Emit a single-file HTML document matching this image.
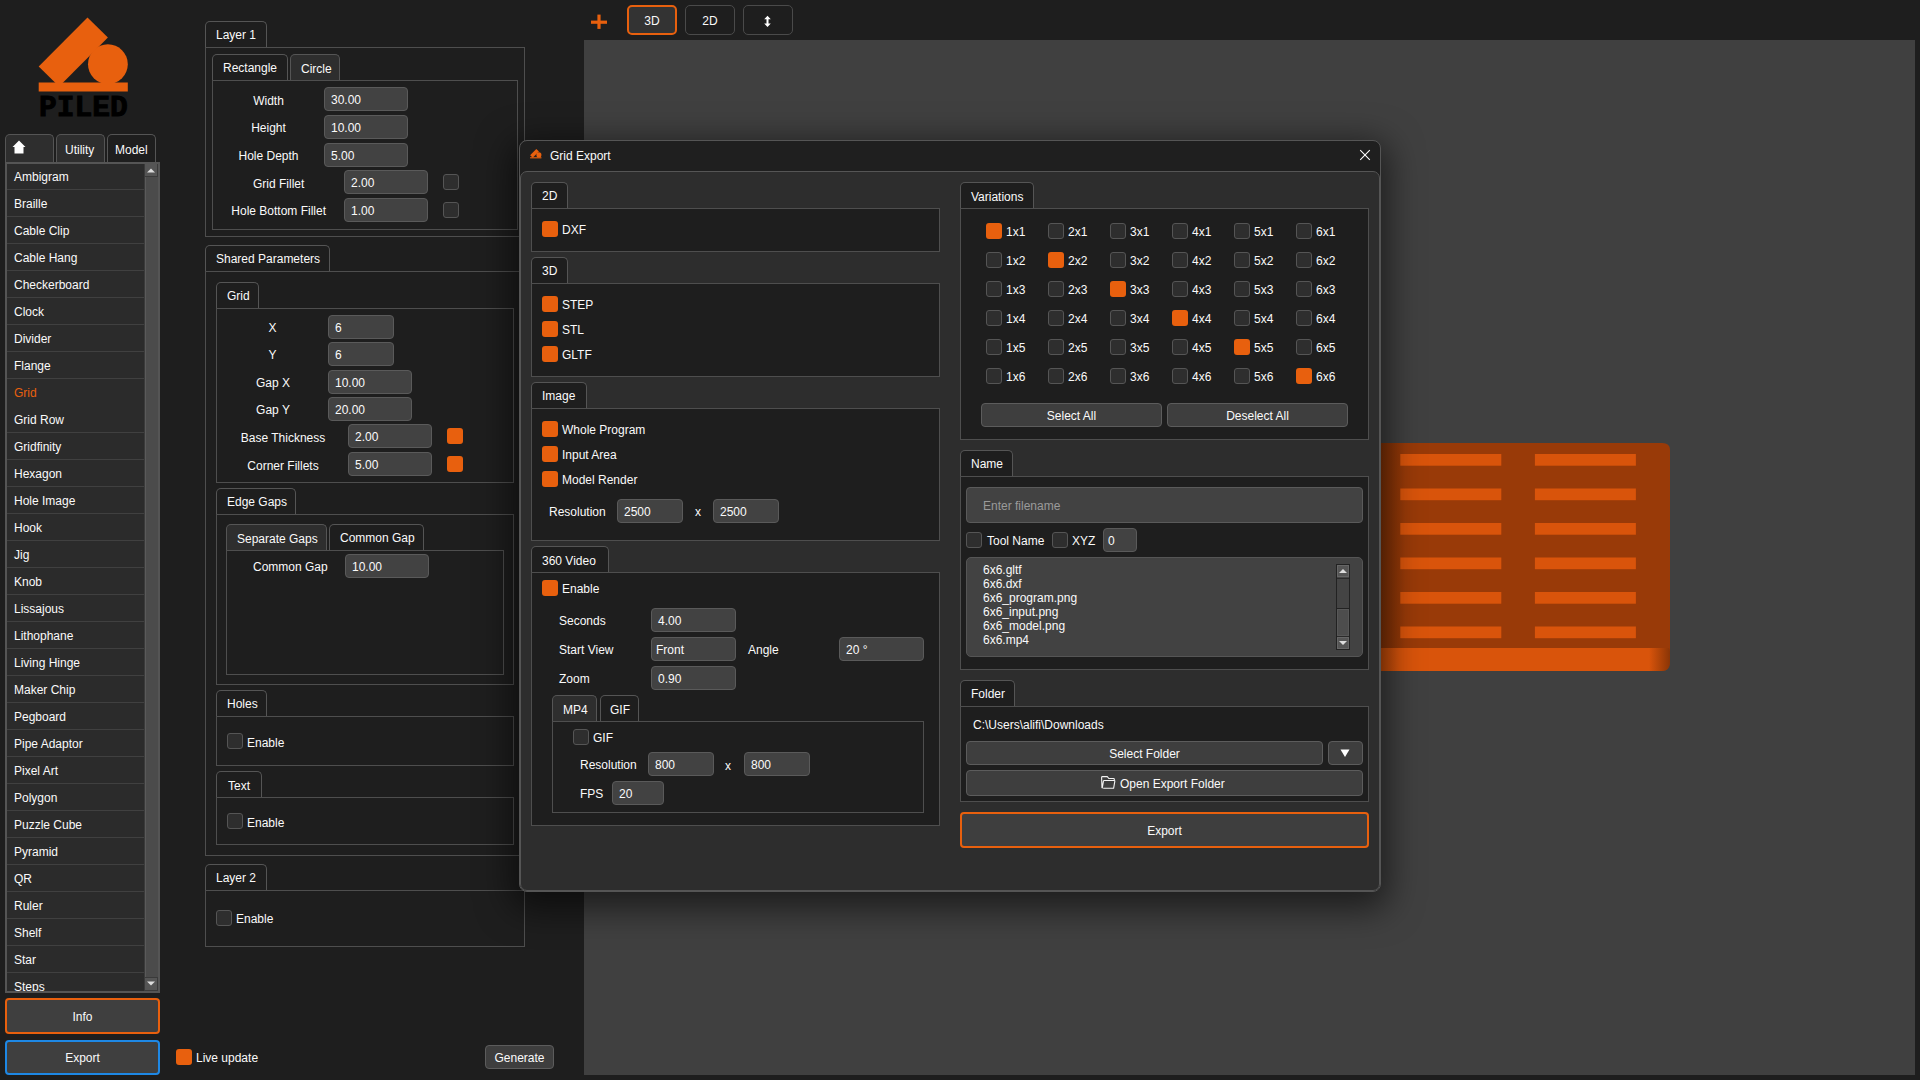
<!DOCTYPE html>
<html><head><meta charset="utf-8"><style>
html,body{margin:0;padding:0;}
body{width:1920px;height:1080px;overflow:hidden;position:relative;background:#1e1e1e;font-family:"Liberation Sans",sans-serif;font-size:12px;color:#fafafa;}
.t{position:absolute;line-height:20px;white-space:nowrap;font-size:12px;color:#fafafa;}
.tab{position:absolute;border:1px solid #555;border-bottom:none;border-radius:5px 5px 0 0;}
.pane{position:absolute;border:1px solid #4e4e4e;}
.inp{position:absolute;border:1px solid #5a5a5a;border-radius:4px;background:#424242;}
.cb{position:absolute;border:1px solid #555;border-radius:3px;background:#2e2e2e;}
.cb.on{border:none;background:#e8600e;}
</style></head><body>
<svg style="position:absolute;left:0;top:0" width="160" height="125" viewBox="0 0 160 125">
<g fill="#e8600e">
<polygon points="87.5,17.6 107.9,37.5 59.1,86.4 38.7,66.5"/>
<circle cx="107.9" cy="64.2" r="19.9"/>
<rect x="38.7" y="82.5" width="89.1" height="9"/>
</g>
<text x="38.9" y="116.3" font-family="Liberation Mono" font-weight="bold" font-size="30" fill="#000" stroke="#000" stroke-width="0.9" textLength="89" lengthAdjust="spacingAndGlyphs">PILED</text>
</svg><div class="tab" style="left:5px;top:134px;width:47px;height:27px;background:#2e2e2e"></div><div class="t" style="left:16px;top:141px;"></div><svg style="position:absolute;left:12px;top:140px" width="15" height="15" viewBox="0 0 15 15"><path d="M7 0.5 L13.5 7 L11.5 7 L11.5 13.5 L2.5 13.5 L2.5 7 L0.5 7 Z" fill="#fff"/></svg><div class="tab" style="left:56px;top:134px;width:47px;height:27px;background:#2e2e2e"></div><div class="t" style="left:65px;top:140px;">Utility</div><div class="tab" style="left:107px;top:134px;width:47px;height:27px;background:#1e1e1e"></div><div class="t" style="left:115px;top:140px;">Model</div><div style="position:absolute;left:5px;top:162px;width:155px;height:831px;box-sizing:border-box;border:2px solid #555;background:#2b2b2b"></div><div style="position:absolute;left:7px;top:164px;width:137px;height:827px;overflow:hidden"><div style="position:absolute;left:0;top:25px;width:137px;height:1px;background:#404040"></div><div class="t" style="left:7px;top:3px;color:#fafafa">Ambigram</div><div style="position:absolute;left:0;top:52px;width:137px;height:1px;background:#404040"></div><div class="t" style="left:7px;top:30px;color:#fafafa">Braille</div><div style="position:absolute;left:0;top:79px;width:137px;height:1px;background:#404040"></div><div class="t" style="left:7px;top:57px;color:#fafafa">Cable Clip</div><div style="position:absolute;left:0;top:106px;width:137px;height:1px;background:#404040"></div><div class="t" style="left:7px;top:84px;color:#fafafa">Cable Hang</div><div style="position:absolute;left:0;top:133px;width:137px;height:1px;background:#404040"></div><div class="t" style="left:7px;top:111px;color:#fafafa">Checkerboard</div><div style="position:absolute;left:0;top:160px;width:137px;height:1px;background:#404040"></div><div class="t" style="left:7px;top:138px;color:#fafafa">Clock</div><div style="position:absolute;left:0;top:187px;width:137px;height:1px;background:#404040"></div><div class="t" style="left:7px;top:165px;color:#fafafa">Divider</div><div style="position:absolute;left:0;top:214px;width:137px;height:1px;background:#404040"></div><div class="t" style="left:7px;top:192px;color:#fafafa">Flange</div><div class="t" style="left:7px;top:219px;color:#e8600e">Grid</div><div style="position:absolute;left:0;top:268px;width:137px;height:1px;background:#404040"></div><div class="t" style="left:7px;top:246px;color:#fafafa">Grid Row</div><div style="position:absolute;left:0;top:295px;width:137px;height:1px;background:#404040"></div><div class="t" style="left:7px;top:273px;color:#fafafa">Gridfinity</div><div style="position:absolute;left:0;top:322px;width:137px;height:1px;background:#404040"></div><div class="t" style="left:7px;top:300px;color:#fafafa">Hexagon</div><div style="position:absolute;left:0;top:349px;width:137px;height:1px;background:#404040"></div><div class="t" style="left:7px;top:327px;color:#fafafa">Hole Image</div><div style="position:absolute;left:0;top:376px;width:137px;height:1px;background:#404040"></div><div class="t" style="left:7px;top:354px;color:#fafafa">Hook</div><div style="position:absolute;left:0;top:403px;width:137px;height:1px;background:#404040"></div><div class="t" style="left:7px;top:381px;color:#fafafa">Jig</div><div style="position:absolute;left:0;top:430px;width:137px;height:1px;background:#404040"></div><div class="t" style="left:7px;top:408px;color:#fafafa">Knob</div><div style="position:absolute;left:0;top:457px;width:137px;height:1px;background:#404040"></div><div class="t" style="left:7px;top:435px;color:#fafafa">Lissajous</div><div style="position:absolute;left:0;top:484px;width:137px;height:1px;background:#404040"></div><div class="t" style="left:7px;top:462px;color:#fafafa">Lithophane</div><div style="position:absolute;left:0;top:511px;width:137px;height:1px;background:#404040"></div><div class="t" style="left:7px;top:489px;color:#fafafa">Living Hinge</div><div style="position:absolute;left:0;top:538px;width:137px;height:1px;background:#404040"></div><div class="t" style="left:7px;top:516px;color:#fafafa">Maker Chip</div><div style="position:absolute;left:0;top:565px;width:137px;height:1px;background:#404040"></div><div class="t" style="left:7px;top:543px;color:#fafafa">Pegboard</div><div style="position:absolute;left:0;top:592px;width:137px;height:1px;background:#404040"></div><div class="t" style="left:7px;top:570px;color:#fafafa">Pipe Adaptor</div><div style="position:absolute;left:0;top:619px;width:137px;height:1px;background:#404040"></div><div class="t" style="left:7px;top:597px;color:#fafafa">Pixel Art</div><div style="position:absolute;left:0;top:646px;width:137px;height:1px;background:#404040"></div><div class="t" style="left:7px;top:624px;color:#fafafa">Polygon</div><div style="position:absolute;left:0;top:673px;width:137px;height:1px;background:#404040"></div><div class="t" style="left:7px;top:651px;color:#fafafa">Puzzle Cube</div><div style="position:absolute;left:0;top:700px;width:137px;height:1px;background:#404040"></div><div class="t" style="left:7px;top:678px;color:#fafafa">Pyramid</div><div style="position:absolute;left:0;top:727px;width:137px;height:1px;background:#404040"></div><div class="t" style="left:7px;top:705px;color:#fafafa">QR</div><div style="position:absolute;left:0;top:754px;width:137px;height:1px;background:#404040"></div><div class="t" style="left:7px;top:732px;color:#fafafa">Ruler</div><div style="position:absolute;left:0;top:781px;width:137px;height:1px;background:#404040"></div><div class="t" style="left:7px;top:759px;color:#fafafa">Shelf</div><div style="position:absolute;left:0;top:808px;width:137px;height:1px;background:#404040"></div><div class="t" style="left:7px;top:786px;color:#fafafa">Star</div><div style="position:absolute;left:0;top:835px;width:137px;height:1px;background:#404040"></div><div class="t" style="left:7px;top:813px;color:#fafafa">Steps</div></div><div style="position:absolute;left:144px;top:164px;width:14px;height:827px;background:#3a3a3a"></div><div style="position:absolute;left:145px;top:177px;width:12px;height:800px;background:#4b4b4b;border-left:1px solid #5a5a5a"></div><div style="position:absolute;left:145px;top:164px;width:12px;height:12px;background:#555"></div><div style="position:absolute;left:145px;top:978px;width:12px;height:12px;background:#555"></div><svg style="position:absolute;left:145px;top:164px" width="12" height="12"><path d="M2 8.5 L6 4.5 L10 8.5 Z" fill="#ddd"/></svg><svg style="position:absolute;left:145px;top:978px" width="12" height="12"><path d="M2 3.5 L6 7.5 L10 3.5 Z" fill="#ddd"/></svg><div style="position:absolute;box-sizing:border-box;left:5px;top:998px;width:155px;height:36px;border:2px solid #e8600e;border-radius:4px;background:#3f3f3f"></div><div class="t" style="left:5px;width:155px;text-align:center;top:1007px;">Info</div><div style="position:absolute;box-sizing:border-box;left:5px;top:1040px;width:155px;height:35px;border:2px solid #1e88e5;border-radius:4px;background:#3f3f3f"></div><div class="t" style="left:5px;width:155px;text-align:center;top:1048px;">Export</div><div class="pane" style="left:205px;top:47px;width:318px;height:188px;background:#1e1e1e"></div><div class="tab" style="left:205px;top:21px;width:60px;height:25px;background:#1e1e1e"></div><div class="t" style="left:216px;top:25px;">Layer 1</div><div class="pane" style="left:212px;top:80px;width:304px;height:148px;background:#1e1e1e"></div><div class="tab" style="left:212px;top:54px;width:74px;height:25px;background:#1e1e1e"></div><div class="t" style="left:223px;top:58px;">Rectangle</div><div class="tab" style="left:290px;top:54px;width:48px;height:25px;background:#2e2e2e"></div><div class="t" style="left:301px;top:59px;">Circle</div><div class="t" style="left:208.5px;width:120.0px;text-align:center;top:91px;">Width</div><div class="inp" style="left:324px;top:87px;width:82px;height:22px"></div><div class="t" style="left:331px;top:90px;color:#fafafa">30.00</div><div class="t" style="left:208.5px;width:120.0px;text-align:center;top:118px;">Height</div><div class="inp" style="left:324px;top:115px;width:82px;height:22px"></div><div class="t" style="left:331px;top:118px;color:#fafafa">10.00</div><div class="t" style="left:208.5px;width:120.0px;text-align:center;top:146px;">Hole Depth</div><div class="inp" style="left:324px;top:143px;width:82px;height:22px"></div><div class="t" style="left:331px;top:146px;color:#fafafa">5.00</div><div class="t" style="left:218.7px;width:120.0px;text-align:center;top:174px;">Grid Fillet</div><div class="inp" style="left:344px;top:170px;width:82px;height:22px"></div><div class="t" style="left:351px;top:173px;color:#fafafa">2.00</div><div class="cb" style="left:443px;top:174px;width:14px;height:14px"></div><div class="t" style="left:218.7px;width:120.0px;text-align:center;top:201px;">Hole Bottom Fillet</div><div class="inp" style="left:344px;top:198px;width:82px;height:22px"></div><div class="t" style="left:351px;top:201px;color:#fafafa">1.00</div><div class="cb" style="left:443px;top:202px;width:14px;height:14px"></div><div class="pane" style="left:205px;top:271px;width:314px;height:583px;background:#1e1e1e"></div><div class="tab" style="left:205px;top:245px;width:123px;height:25px;background:#1e1e1e"></div><div class="t" style="left:216px;top:249px;">Shared Parameters</div><div class="pane" style="left:216px;top:308px;width:296px;height:173px;background:#1e1e1e"></div><div class="tab" style="left:216px;top:282px;width:41px;height:25px;background:#1e1e1e"></div><div class="t" style="left:227px;top:286px;">Grid</div><div class="t" style="left:212.5px;width:120.0px;text-align:center;top:318px;">X</div><div class="inp" style="left:328px;top:315px;width:64px;height:22px"></div><div class="t" style="left:335px;top:318px;color:#fafafa">6</div><div class="t" style="left:212.5px;width:120.0px;text-align:center;top:345px;">Y</div><div class="inp" style="left:328px;top:342px;width:64px;height:22px"></div><div class="t" style="left:335px;top:345px;color:#fafafa">6</div><div class="t" style="left:213px;width:120px;text-align:center;top:373px;">Gap X</div><div class="inp" style="left:328px;top:370px;width:82px;height:22px"></div><div class="t" style="left:335px;top:373px;color:#fafafa">10.00</div><div class="t" style="left:213px;width:120px;text-align:center;top:400px;">Gap Y</div><div class="inp" style="left:328px;top:397px;width:82px;height:22px"></div><div class="t" style="left:335px;top:400px;color:#fafafa">20.00</div><div class="t" style="left:223px;width:120px;text-align:center;top:428px;">Base Thickness</div><div class="inp" style="left:348px;top:424px;width:82px;height:22px"></div><div class="t" style="left:355px;top:427px;color:#fafafa">2.00</div><div class="cb on" style="left:447px;top:428px;width:16px;height:16px"></div><div class="t" style="left:223px;width:120px;text-align:center;top:456px;">Corner Fillets</div><div class="inp" style="left:348px;top:452px;width:82px;height:22px"></div><div class="t" style="left:355px;top:455px;color:#fafafa">5.00</div><div class="cb on" style="left:447px;top:456px;width:16px;height:16px"></div><div class="pane" style="left:216px;top:514px;width:296px;height:169px;background:#1e1e1e"></div><div class="tab" style="left:216px;top:488px;width:78px;height:25px;background:#1e1e1e"></div><div class="t" style="left:227px;top:492px;">Edge Gaps</div><div class="pane" style="left:226px;top:550px;width:276px;height:123px;background:#1e1e1e"></div><div class="tab" style="left:226px;top:524px;width:99px;height:25px;background:#2e2e2e"></div><div class="t" style="left:237px;top:529px;">Separate Gaps</div><div class="tab" style="left:329px;top:524px;width:93px;height:25px;background:#1e1e1e"></div><div class="t" style="left:340px;top:528px;">Common Gap</div><div class="t" style="left:253px;top:557px;">Common Gap</div><div class="inp" style="left:345px;top:554px;width:82px;height:22px"></div><div class="t" style="left:352px;top:557px;color:#fafafa">10.00</div><div class="pane" style="left:216px;top:716px;width:296px;height:48px;background:#1e1e1e"></div><div class="tab" style="left:216px;top:690px;width:49px;height:25px;background:#1e1e1e"></div><div class="t" style="left:227px;top:694px;">Holes</div><div class="cb" style="left:227px;top:733px;width:14px;height:14px"></div><div class="t" style="left:247px;top:733px;">Enable</div><div class="pane" style="left:216px;top:797px;width:296px;height:46px;background:#1e1e1e"></div><div class="tab" style="left:216px;top:771px;width:44px;height:25px;background:#1e1e1e"></div><div class="t" style="left:228px;top:776px;">Text</div><div class="cb" style="left:227px;top:813px;width:14px;height:14px"></div><div class="t" style="left:247px;top:813px;">Enable</div><div class="pane" style="left:205px;top:890px;width:318px;height:55px;background:#1e1e1e"></div><div class="tab" style="left:205px;top:864px;width:60px;height:25px;background:#1e1e1e"></div><div class="t" style="left:216px;top:868px;">Layer 2</div><div class="cb" style="left:216px;top:910px;width:14px;height:14px"></div><div class="t" style="left:236px;top:909px;">Enable</div><div class="cb on" style="left:176px;top:1049px;width:16px;height:16px"></div><div class="t" style="left:196px;top:1048px;">Live update</div><div style="position:absolute;box-sizing:border-box;left:485px;top:1045px;width:69px;height:24px;border:1px solid #5c5c5c;border-radius:4px;background:#3e3e3e"></div><div class="t" style="left:485px;width:69px;text-align:center;top:1048px;">Generate</div><svg style="position:absolute;left:590px;top:13px" width="18" height="18"><rect x="7.4" y="1.6" width="3.2" height="14.3" fill="#e8600e"/><rect x="1" y="7.6" width="16" height="3.2" fill="#e8600e"/></svg><div style="position:absolute;box-sizing:border-box;left:627px;top:5px;width:50px;height:30px;border:2px solid #e8600e;border-radius:5px;background:#333"></div><div class="t" style="left:627px;width:50px;text-align:center;top:11px;">3D</div><div style="position:absolute;box-sizing:border-box;left:685px;top:5px;width:50px;height:30px;border:1px solid #4a4a4a;border-radius:5px;background:#1e1e1e"></div><div class="t" style="left:685px;width:50px;text-align:center;top:11px;">2D</div><div style="position:absolute;box-sizing:border-box;left:743px;top:5px;width:50px;height:30px;border:1px solid #4a4a4a;border-radius:5px;background:#1e1e1e"></div><svg style="position:absolute;left:762px;top:15px" width="11" height="13"><path d="M5.5 0.7 L8.8 4.3 L6.5 4.3 L6.5 8.4 L8.8 8.4 L5.5 12 L2.2 8.4 L4.5 8.4 L4.5 4.3 L2.2 4.3 Z" fill="#fff"/></svg><div style="position:absolute;left:584px;top:40px;width:1331px;height:1035px;background:#404040"></div><svg style="position:absolute;left:1370px;top:440px" width="310" height="240" viewBox="0 0 310 240">
<defs>
<linearGradient id="lg" x1="0" x2="1" y1="0" y2="0"><stop offset="0" stop-color="#7a2f06"/><stop offset="0.12" stop-color="#993a08"/><stop offset="1" stop-color="#993a08"/></linearGradient>
<linearGradient id="lg2" x1="0" x2="1"><stop offset="0" stop-color="#b54709"/><stop offset="0.1" stop-color="#d9540b"/><stop offset="0.93" stop-color="#d9540b"/><stop offset="1" stop-color="#8a3506"/></linearGradient>
</defs>
<path d="M0 3 L292 3 Q300 3 300 10 L300 220 Q300 231 292 231 L0 231 Z" fill="url(#lg)"/>
<path d="M0 208 L298 208 Q300 208 300 212 L300 222 Q300 231 292 231 L0 231 Z" fill="url(#lg2)"/>
<rect x="30.3" y="14.0" width="101" height="11.7" fill="#d9540b"/><rect x="164.9" y="14.0" width="101" height="11.7" fill="#d9540b"/><rect x="30.3" y="48.5" width="101" height="11.7" fill="#d9540b"/><rect x="164.9" y="48.5" width="101" height="11.7" fill="#d9540b"/><rect x="30.3" y="83.0" width="101" height="11.7" fill="#d9540b"/><rect x="164.9" y="83.0" width="101" height="11.7" fill="#d9540b"/><rect x="30.3" y="117.5" width="101" height="11.7" fill="#d9540b"/><rect x="164.9" y="117.5" width="101" height="11.7" fill="#d9540b"/><rect x="30.3" y="152.0" width="101" height="11.7" fill="#d9540b"/><rect x="164.9" y="152.0" width="101" height="11.7" fill="#d9540b"/><rect x="30.3" y="186.5" width="101" height="11.7" fill="#d9540b"/><rect x="164.9" y="186.5" width="101" height="11.7" fill="#d9540b"/>
</svg><div style="position:absolute;left:519px;top:140px;width:861px;height:751px;border-radius:8px;box-shadow:0 10px 34px 8px rgba(0,0,0,0.55)"></div><div style="position:absolute;left:519px;top:140px;width:862px;height:752px;box-sizing:border-box;border:1px solid #555;border-radius:8px;background:#1f1f1f"></div><div style="position:absolute;left:520px;top:171px;width:860px;height:720px;box-sizing:border-box;border:1px solid #555;border-radius:7px;background:#2d2d2d"></div><svg style="position:absolute;left:529px;top:148px" width="14" height="14" viewBox="30 10 110 110">
<g fill="#e8600e"><polygon points="87.5,17.6 107.9,37.5 59.1,86.4 38.7,66.5"/><circle cx="107.9" cy="64.2" r="19.9"/><rect x="38.7" y="82.5" width="89.1" height="9"/></g></svg><div class="t" style="left:550px;top:146px;">Grid Export</div><svg style="position:absolute;left:1359px;top:149px" width="12" height="12"><path d="M1.2 1.2 L10.8 10.8 M10.8 1.2 L1.2 10.8" stroke="#fff" stroke-width="1.05"/></svg><div class="pane" style="left:531px;top:208px;width:407px;height:42px;background:#1e1e1e"></div><div class="tab" style="left:531px;top:182px;width:35px;height:25px;background:#1e1e1e"></div><div class="t" style="left:542px;top:186px;">2D</div><div class="cb on" style="left:542px;top:221px;width:16px;height:16px"></div><div class="t" style="left:562px;top:220px;">DXF</div><div class="pane" style="left:531px;top:283px;width:407px;height:92px;background:#1e1e1e"></div><div class="tab" style="left:531px;top:257px;width:35px;height:25px;background:#1e1e1e"></div><div class="t" style="left:542px;top:261px;">3D</div><div class="cb on" style="left:542px;top:296px;width:16px;height:16px"></div><div class="t" style="left:562px;top:295px;">STEP</div><div class="cb on" style="left:542px;top:321px;width:16px;height:16px"></div><div class="t" style="left:562px;top:320px;">STL</div><div class="cb on" style="left:542px;top:346px;width:16px;height:16px"></div><div class="t" style="left:562px;top:345px;">GLTF</div><div class="pane" style="left:531px;top:408px;width:407px;height:131px;background:#1e1e1e"></div><div class="tab" style="left:531px;top:382px;width:54px;height:25px;background:#1e1e1e"></div><div class="t" style="left:542px;top:386px;">Image</div><div class="cb on" style="left:542px;top:421px;width:16px;height:16px"></div><div class="t" style="left:562px;top:420px;">Whole Program</div><div class="cb on" style="left:542px;top:446px;width:16px;height:16px"></div><div class="t" style="left:562px;top:445px;">Input Area</div><div class="cb on" style="left:542px;top:471px;width:16px;height:16px"></div><div class="t" style="left:562px;top:470px;">Model Render</div><div class="t" style="left:549px;top:502px;">Resolution</div><div class="inp" style="left:617px;top:499px;width:64px;height:22px"></div><div class="t" style="left:624px;top:502px;color:#fafafa">2500</div><div class="t" style="left:695px;top:502px;">x</div><div class="inp" style="left:713px;top:499px;width:64px;height:22px"></div><div class="t" style="left:720px;top:502px;color:#fafafa">2500</div><div class="pane" style="left:531px;top:572px;width:407px;height:252px;background:#1e1e1e"></div><div class="tab" style="left:531px;top:546px;width:76px;height:25px;background:#1e1e1e"></div><div class="t" style="left:542px;top:551px;">360 Video</div><div class="cb on" style="left:542px;top:580px;width:16px;height:16px"></div><div class="t" style="left:562px;top:579px;">Enable</div><div class="t" style="left:559px;top:611px;">Seconds</div><div class="inp" style="left:651px;top:608px;width:83px;height:22px"></div><div class="t" style="left:658px;top:611px;color:#fafafa">4.00</div><div class="t" style="left:559px;top:640px;">Start View</div><div class="inp" style="left:651px;top:637px;width:83px;height:22px"></div><div class="t" style="left:656px;top:640px;color:#fafafa">Front</div><div class="t" style="left:748px;top:640px;">Angle</div><div class="inp" style="left:839px;top:637px;width:83px;height:22px"></div><div class="t" style="left:846px;top:640px;color:#fafafa">20 °</div><div class="t" style="left:559px;top:669px;">Zoom</div><div class="inp" style="left:651px;top:666px;width:83px;height:22px"></div><div class="t" style="left:658px;top:669px;color:#fafafa">0.90</div><div class="pane" style="left:552px;top:721px;width:370px;height:90px;background:#1e1e1e"></div><div class="tab" style="left:552px;top:695px;width:43px;height:25px;background:#2e2e2e"></div><div class="t" style="left:563px;top:700px;">MP4</div><div class="tab" style="left:600px;top:695px;width:37px;height:25px;background:#1e1e1e"></div><div class="t" style="left:610px;top:700px;">GIF</div><div class="cb" style="left:573px;top:729px;width:14px;height:14px"></div><div class="t" style="left:593px;top:728px;">GIF</div><div class="t" style="left:580px;top:755px;">Resolution</div><div class="inp" style="left:648px;top:752px;width:64px;height:22px"></div><div class="t" style="left:655px;top:755px;color:#fafafa">800</div><div class="t" style="left:725px;top:756px;">x</div><div class="inp" style="left:744px;top:752px;width:64px;height:22px"></div><div class="t" style="left:751px;top:755px;color:#fafafa">800</div><div class="t" style="left:580px;top:784px;">FPS</div><div class="inp" style="left:612px;top:781px;width:50px;height:22px"></div><div class="t" style="left:619px;top:784px;color:#fafafa">20</div><div class="pane" style="left:960px;top:208px;width:407px;height:230px;background:#1e1e1e"></div><div class="tab" style="left:960px;top:182px;width:72px;height:25px;background:#1e1e1e"></div><div class="t" style="left:971px;top:187px;">Variations</div><div class="cb on" style="left:986px;top:223px;width:16px;height:16px"></div><div class="t" style="left:1006px;top:222px;">1x1</div><div class="cb" style="left:1048px;top:223px;width:14px;height:14px"></div><div class="t" style="left:1068px;top:222px;">2x1</div><div class="cb" style="left:1110px;top:223px;width:14px;height:14px"></div><div class="t" style="left:1130px;top:222px;">3x1</div><div class="cb" style="left:1172px;top:223px;width:14px;height:14px"></div><div class="t" style="left:1192px;top:222px;">4x1</div><div class="cb" style="left:1234px;top:223px;width:14px;height:14px"></div><div class="t" style="left:1254px;top:222px;">5x1</div><div class="cb" style="left:1296px;top:223px;width:14px;height:14px"></div><div class="t" style="left:1316px;top:222px;">6x1</div><div class="cb" style="left:986px;top:252px;width:14px;height:14px"></div><div class="t" style="left:1006px;top:251px;">1x2</div><div class="cb on" style="left:1048px;top:252px;width:16px;height:16px"></div><div class="t" style="left:1068px;top:251px;">2x2</div><div class="cb" style="left:1110px;top:252px;width:14px;height:14px"></div><div class="t" style="left:1130px;top:251px;">3x2</div><div class="cb" style="left:1172px;top:252px;width:14px;height:14px"></div><div class="t" style="left:1192px;top:251px;">4x2</div><div class="cb" style="left:1234px;top:252px;width:14px;height:14px"></div><div class="t" style="left:1254px;top:251px;">5x2</div><div class="cb" style="left:1296px;top:252px;width:14px;height:14px"></div><div class="t" style="left:1316px;top:251px;">6x2</div><div class="cb" style="left:986px;top:281px;width:14px;height:14px"></div><div class="t" style="left:1006px;top:280px;">1x3</div><div class="cb" style="left:1048px;top:281px;width:14px;height:14px"></div><div class="t" style="left:1068px;top:280px;">2x3</div><div class="cb on" style="left:1110px;top:281px;width:16px;height:16px"></div><div class="t" style="left:1130px;top:280px;">3x3</div><div class="cb" style="left:1172px;top:281px;width:14px;height:14px"></div><div class="t" style="left:1192px;top:280px;">4x3</div><div class="cb" style="left:1234px;top:281px;width:14px;height:14px"></div><div class="t" style="left:1254px;top:280px;">5x3</div><div class="cb" style="left:1296px;top:281px;width:14px;height:14px"></div><div class="t" style="left:1316px;top:280px;">6x3</div><div class="cb" style="left:986px;top:310px;width:14px;height:14px"></div><div class="t" style="left:1006px;top:309px;">1x4</div><div class="cb" style="left:1048px;top:310px;width:14px;height:14px"></div><div class="t" style="left:1068px;top:309px;">2x4</div><div class="cb" style="left:1110px;top:310px;width:14px;height:14px"></div><div class="t" style="left:1130px;top:309px;">3x4</div><div class="cb on" style="left:1172px;top:310px;width:16px;height:16px"></div><div class="t" style="left:1192px;top:309px;">4x4</div><div class="cb" style="left:1234px;top:310px;width:14px;height:14px"></div><div class="t" style="left:1254px;top:309px;">5x4</div><div class="cb" style="left:1296px;top:310px;width:14px;height:14px"></div><div class="t" style="left:1316px;top:309px;">6x4</div><div class="cb" style="left:986px;top:339px;width:14px;height:14px"></div><div class="t" style="left:1006px;top:338px;">1x5</div><div class="cb" style="left:1048px;top:339px;width:14px;height:14px"></div><div class="t" style="left:1068px;top:338px;">2x5</div><div class="cb" style="left:1110px;top:339px;width:14px;height:14px"></div><div class="t" style="left:1130px;top:338px;">3x5</div><div class="cb" style="left:1172px;top:339px;width:14px;height:14px"></div><div class="t" style="left:1192px;top:338px;">4x5</div><div class="cb on" style="left:1234px;top:339px;width:16px;height:16px"></div><div class="t" style="left:1254px;top:338px;">5x5</div><div class="cb" style="left:1296px;top:339px;width:14px;height:14px"></div><div class="t" style="left:1316px;top:338px;">6x5</div><div class="cb" style="left:986px;top:368px;width:14px;height:14px"></div><div class="t" style="left:1006px;top:367px;">1x6</div><div class="cb" style="left:1048px;top:368px;width:14px;height:14px"></div><div class="t" style="left:1068px;top:367px;">2x6</div><div class="cb" style="left:1110px;top:368px;width:14px;height:14px"></div><div class="t" style="left:1130px;top:367px;">3x6</div><div class="cb" style="left:1172px;top:368px;width:14px;height:14px"></div><div class="t" style="left:1192px;top:367px;">4x6</div><div class="cb" style="left:1234px;top:368px;width:14px;height:14px"></div><div class="t" style="left:1254px;top:367px;">5x6</div><div class="cb on" style="left:1296px;top:368px;width:16px;height:16px"></div><div class="t" style="left:1316px;top:367px;">6x6</div><div style="position:absolute;box-sizing:border-box;left:981px;top:403px;width:181px;height:24px;border:1px solid #5c5c5c;border-radius:4px;background:#3e3e3e"></div><div class="t" style="left:981px;width:181px;text-align:center;top:406px;">Select All</div><div style="position:absolute;box-sizing:border-box;left:1167px;top:403px;width:181px;height:24px;border:1px solid #5c5c5c;border-radius:4px;background:#3e3e3e"></div><div class="t" style="left:1167px;width:181px;text-align:center;top:406px;">Deselect All</div><div class="pane" style="left:960px;top:476px;width:407px;height:192px;background:#1e1e1e"></div><div class="tab" style="left:960px;top:450px;width:51px;height:25px;background:#1e1e1e"></div><div class="t" style="left:971px;top:454px;">Name</div><div class="inp" style="left:966px;top:487px;width:395px;height:34px"></div><div class="t" style="left:983px;top:496px;color:#9a9a9a">Enter filename</div><div class="cb" style="left:966px;top:532px;width:14px;height:14px"></div><div class="t" style="left:987px;top:531px;">Tool Name</div><div class="cb" style="left:1052px;top:532px;width:14px;height:14px"></div><div class="t" style="left:1072px;top:531px;">XYZ</div><div class="inp" style="left:1103px;top:528px;width:32px;height:22px"></div><div class="t" style="left:1108px;top:531px;color:#fafafa">0</div><div style="position:absolute;left:966px;top:557px;width:397px;height:100px;box-sizing:border-box;border:1px solid #555;border-radius:5px;background:#424242"></div><div class="t" style="left:983px;top:560px;">6x6.gltf</div><div class="t" style="left:983px;top:574px;">6x6.dxf</div><div class="t" style="left:983px;top:588px;">6x6_program.png</div><div class="t" style="left:983px;top:602px;">6x6_input.png</div><div class="t" style="left:983px;top:616px;">6x6_model.png</div><div class="t" style="left:983px;top:630px;">6x6.mp4</div><div style="position:absolute;left:1336px;top:564px;width:14px;height:86px;background:#444;border:1px solid #222;box-sizing:border-box"></div><div style="position:absolute;left:1337px;top:565px;width:12px;height:12px;background:#555;border:1px solid #666;box-sizing:border-box"></div><div style="position:absolute;left:1337px;top:578px;width:12px;height:1px;background:#2a2a2a"></div><div style="position:absolute;left:1337px;top:637px;width:12px;height:12px;background:#555;border:1px solid #666;box-sizing:border-box"></div><div style="position:absolute;left:1337px;top:636px;width:12px;height:1px;background:#2a2a2a"></div><div style="position:absolute;left:1337px;top:608px;width:12px;height:1px;background:#222"></div><div style="position:absolute;left:1337px;top:609px;width:12px;height:27px;background:#4d4d4d;border:1px solid #585858;box-sizing:border-box"></div><svg style="position:absolute;left:1337px;top:565px" width="12" height="12"><path d="M2 8 L6 4 L10 8 Z" fill="#ddd"/></svg><svg style="position:absolute;left:1337px;top:637px" width="12" height="12"><path d="M2 4 L6 8 L10 4 Z" fill="#ddd"/></svg><div class="pane" style="left:960px;top:706px;width:407px;height:94px;background:#1e1e1e"></div><div class="tab" style="left:960px;top:680px;width:53px;height:25px;background:#1e1e1e"></div><div class="t" style="left:971px;top:684px;">Folder</div><div class="t" style="left:973px;top:715px;">C:\Users\alifi\Downloads</div><div style="position:absolute;box-sizing:border-box;left:966px;top:741px;width:357px;height:24px;border:1px solid #5c5c5c;border-radius:4px;background:#3e3e3e"></div><div class="t" style="left:966px;width:357px;text-align:center;top:744px;">Select Folder</div><div style="position:absolute;box-sizing:border-box;left:1328px;top:741px;width:35px;height:24px;border:1px solid #5c5c5c;border-radius:4px;background:#3e3e3e"></div><svg style="position:absolute;left:1339px;top:747px" width="12" height="12"><path d="M1.5 2.5 L10.5 2.5 L6 10 Z" fill="#fff"/></svg><div style="position:absolute;box-sizing:border-box;left:966px;top:770px;width:397px;height:26px;border:1px solid #5c5c5c;border-radius:4px;background:#3e3e3e"></div><svg style="position:absolute;left:1100px;top:775px" width="17" height="15"><path d="M2 13 L1.6 2.4 Q1.6 1.6 2.4 1.6 L7.3 1.6 L8.8 3.5 L13.6 3.5 Q14.3 3.5 14.3 4.3 L14.3 5.5 M3.2 13.3 L13.6 13.3 L14.8 6.3 Q14.9 5.5 14.1 5.5 L4.3 5.5 Q3.5 5.5 3.4 6.3 L2.2 13.3" fill="none" stroke="#f4f4f4" stroke-width="1.1" stroke-linejoin="round"/></svg><div class="t" style="left:1120px;top:774px;">Open Export Folder</div><div style="position:absolute;box-sizing:border-box;left:960px;top:812px;width:409px;height:36px;border:2px solid #e8600e;border-radius:4px;background:#3e3e3e"></div><div class="t" style="left:960px;width:409px;text-align:center;top:821px;">Export</div>
</body></html>
